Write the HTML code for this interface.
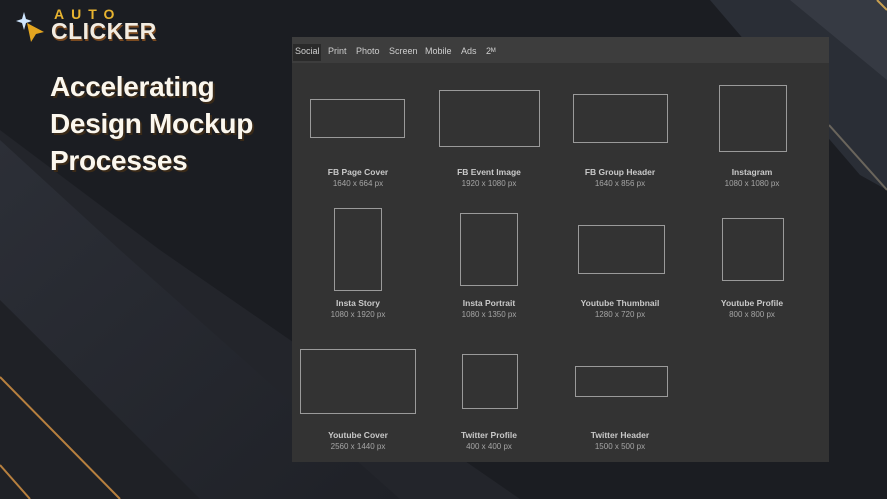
<!DOCTYPE html>
<html><head><style>
body{margin:0;width:887px;height:499px;overflow:hidden;background:#1b1d22;font-family:"Liberation Sans",sans-serif;position:relative}
.a{position:absolute}
.r{position:absolute;border:1.5px solid #9a9a9a;box-sizing:border-box}
.l{position:absolute;width:140px;text-align:center;color:#c9c9c9;font-size:8.5px;font-weight:bold;line-height:11px}
.l span{display:block;font-weight:normal;color:#a5a5a5;font-size:8px}
h1{position:absolute;left:50px;top:68px;margin:0;color:#fbf7ee;font-size:28px;line-height:37px;font-weight:bold;letter-spacing:-0.3px;text-shadow:2px 2px 0 #3a2a18}
.tab{position:absolute;top:46px;color:#cfcfcf;font-size:9px}
</style></head><body>
<svg class="a" style="left:0;top:0" width="887" height="499">
<defs><linearGradient id="g" x1="0" y1="0" x2="1" y2="1"><stop offset="0" stop-color="#2c2f37"/><stop offset="1" stop-color="#1f2127"/></linearGradient></defs>
<polygon points="0,130 160,250 520,499 0,499" fill="#23252b"/>
<polygon points="0,140 120,250 400,499 180,499 0,330" fill="url(#g)"/>
<polygon points="0,300 200,499 0,499" fill="#1f2126"/>
<line x1="0" y1="377" x2="120" y2="499" stroke="#b7803f" stroke-width="2"/>
<line x1="0" y1="465" x2="30" y2="499" stroke="#b7803f" stroke-width="2"/>
<polygon points="710,0 887,0 887,190 860,175" fill="#2a2e36"/>
<polygon points="790,0 887,0 887,80" fill="#363a43"/>
<line x1="829" y1="125" x2="887" y2="190" stroke="#6a655c" stroke-width="2"/>
<line x1="877" y1="0" x2="887" y2="10" stroke="#c9a050" stroke-width="2"/>
</svg>
<svg class="a" style="left:16px;top:10px" width="30" height="35"><path d="M8 2 L10 9 L16 11 L10 13 L8 20 L6 13 L0 11 L6 9Z" fill="#cfe6ff"/><path d="M11 13 L28 22 L20 24 L15 32Z" fill="#e3a520"/></svg>
<div class="a" style="left:54px;top:6px;color:#e8b430;font-weight:bold;font-size:14px;letter-spacing:7px">AUTO</div>
<div class="a" style="left:51px;top:18px;color:#f2ece2;font-weight:900;font-size:23px;letter-spacing:0.5px;text-shadow:1px 2px 0 #7a4a20">CLICKER</div>
<h1>Accelerating<br>Design Mockup<br>Processes</h1>
<div class="a" style="left:292px;top:37px;width:537px;height:425px;background:#333333"></div>
<div class="a" style="left:292px;top:37px;width:537px;height:26px;background:#3d3d3d"></div>
<div class="a" style="left:293px;top:44px;width:28px;height:17px;background:#2a2a2a"></div>
<div class="tab" style="left:295px">Social</div><div class="tab" style="left:328px">Print</div><div class="tab" style="left:356px">Photo</div><div class="tab" style="left:389px">Screen</div><div class="tab" style="left:425px">Mobile</div><div class="tab" style="left:461px">Ads</div><div class="tab" style="left:486px">2ᴹ</div>
<div class="r" style="left:310px;top:99px;width:95px;height:39px"></div>
<div class="r" style="left:439px;top:90px;width:101px;height:57px"></div>
<div class="r" style="left:573px;top:94px;width:95px;height:49px"></div>
<div class="r" style="left:719px;top:85px;width:68px;height:67px"></div>
<div class="r" style="left:334px;top:208px;width:48px;height:83px"></div>
<div class="r" style="left:460px;top:213px;width:58px;height:73px"></div>
<div class="r" style="left:578px;top:225px;width:87px;height:49px"></div>
<div class="r" style="left:722px;top:218px;width:62px;height:63px"></div>
<div class="r" style="left:300px;top:349px;width:116px;height:65px"></div>
<div class="r" style="left:462px;top:354px;width:56px;height:55px"></div>
<div class="r" style="left:575px;top:366px;width:93px;height:31px"></div>
<div class="l" style="left:288px;top:167px">FB Page Cover<span>1640 x 664 px</span></div>
<div class="l" style="left:419px;top:167px">FB Event Image<span>1920 x 1080 px</span></div>
<div class="l" style="left:550px;top:167px">FB Group Header<span>1640 x 856 px</span></div>
<div class="l" style="left:682px;top:167px">Instagram<span>1080 x 1080 px</span></div>
<div class="l" style="left:288px;top:298px">Insta Story<span>1080 x 1920 px</span></div>
<div class="l" style="left:419px;top:298px">Insta Portrait<span>1080 x 1350 px</span></div>
<div class="l" style="left:550px;top:298px">Youtube Thumbnail<span>1280 x 720 px</span></div>
<div class="l" style="left:682px;top:298px">Youtube Profile<span>800 x 800 px</span></div>
<div class="l" style="left:288px;top:430px">Youtube Cover<span>2560 x 1440 px</span></div>
<div class="l" style="left:419px;top:430px">Twitter Profile<span>400 x 400 px</span></div>
<div class="l" style="left:550px;top:430px">Twitter Header<span>1500 x 500 px</span></div>
</body></html>
